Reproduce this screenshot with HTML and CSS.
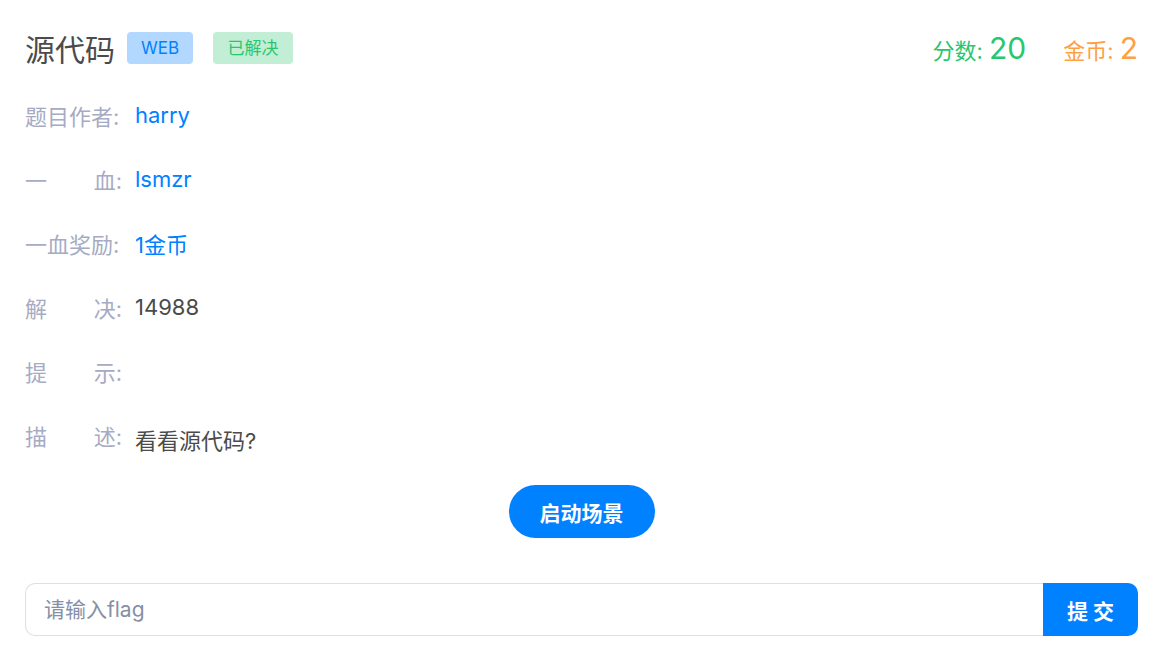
FILE: index.html
```html
<!DOCTYPE html>
<html lang="zh-CN">
<head>
    <meta charset="UTF-8">
    <meta name="viewport" content="width=device-width, initial-scale=1.0">
    <title>源代码</title>
    <link rel="stylesheet" href="styles.css">
</head>
<body>

    <div class="header">
        <div class="title-wrap">
            <h2 class="title">源代码</h2>
            <span class="badge badge-web">WEB</span>
            <span class="badge badge-solved">已解决</span>
        </div>
        <div class="stats">
            <span class="stat score">分数: <b>20</b></span>
            <span class="stat coin">金币: <b>2</b></span>
        </div>
    </div>

    <div class="info">
        <div class="row">
            <div class="label"><span>题目作者:</span></div>
            <div class="value link">harry</div>
        </div>
        <div class="row">
            <div class="label"><span>一</span><span>血:</span></div>
            <div class="value link">lsmzr</div>
        </div>
        <div class="row">
            <div class="label"><span>一血奖励:</span></div>
            <div class="value link">1金币</div>
        </div>
        <div class="row">
            <div class="label"><span>解</span><span>决:</span></div>
            <div class="value">14988</div>
        </div>
        <div class="row">
            <div class="label"><span>提</span><span>示:</span></div>
            <div class="value"></div>
        </div>
        <div class="row">
            <div class="label"><span>描</span><span>述:</span></div>
            <div class="value desc">看看源代码?</div>
        </div>
    </div>

    <div class="actions">
        <button class="start-btn">启动场景</button>
    </div>

    <div class="flag-form">
        <input type="text" class="flag-input" placeholder="请输入flag">
        <button class="submit-btn">提 交</button>
    </div>

</body>
</html>
```

FILE: styles.css
```css
body {
    margin: 0;
    padding: 0 34px 0 25px;
    font-family: Inter, "Noto Sans CJK SC", sans-serif;
    color: #4b4b4b;
    background: #fff;
}
.header {
    display: flex;
    justify-content: space-between;
    align-items: center;
    height: 96px;
}
.title-wrap {
    display: flex;
    align-items: center;
}
.title {
    margin: 0 12px 0 0;
    font-size: 30px;
    font-weight: 400;
    color: #4b4b4b;
}
.badge {
    display: inline-block;
    height: 32px;
    line-height: 32px;
    border-radius: 4px;
    font-size: 17px;
    text-align: center;
}
.badge-web {
    width: 66px;
    background-color: #b3d8ff;
    color: #0081ff;
    margin-right: 20px;
}
.badge-solved {
    width: 80px;
    background-color: #c1eed5;
    color: #28c76f;
}
.stats {
    display: flex;
    align-items: baseline;
    gap: 37px;
}
.stat {
    font-size: 22px;
}
.stat b {
    font-weight: 400;
    font-size: 30px;
}
.score {
    color: #28c76f;
}
.coin {
    color: #ff9f43;
}
.info {
    margin-top: -13px;
}
.row {
    display: flex;
    align-items: center;
    height: 64px;
    font-size: 22px;
}
.label {
    display: flex;
    justify-content: space-between;
    width: 97px;
    margin-right: 13px;
    color: #a6abc3;
}
.value {
    color: #4b4b4b;
}
.link {
    color: #0081ff;
}
.desc {
    padding-top: 8px;
}
.actions {
    text-align: center;
    margin-top: 18px;
}
.start-btn {
    width: 146px;
    height: 53px;
    border: none;
    border-radius: 27px;
    background-color: #0081ff;
    color: white;
    font-family: Inter, "Noto Sans CJK SC", sans-serif;
    font-size: 21px;
    font-weight: 700;
    cursor: pointer;
}
.flag-form {
    display: flex;
    margin-top: 45px;
}
.flag-input {
    flex: 1;
    height: 53px;
    box-sizing: border-box;
    border: 1px solid #dcdfe6;
    border-right: none;
    border-radius: 10px 0 0 10px;
    padding: 0 18px;
    font-family: Inter, "Noto Sans CJK SC", sans-serif;
    font-size: 21px;
    color: #4b4b4b;
    outline: none;
}
.flag-input::placeholder {
    color: #8590a6;
}
.submit-btn {
    width: 95px;
    height: 53px;
    border: none;
    border-radius: 0 10px 10px 0;
    background-color: #0081ff;
    color: white;
    font-family: Inter, "Noto Sans CJK SC", sans-serif;
    font-size: 21px;
    font-weight: 700;
    cursor: pointer;
}
```
